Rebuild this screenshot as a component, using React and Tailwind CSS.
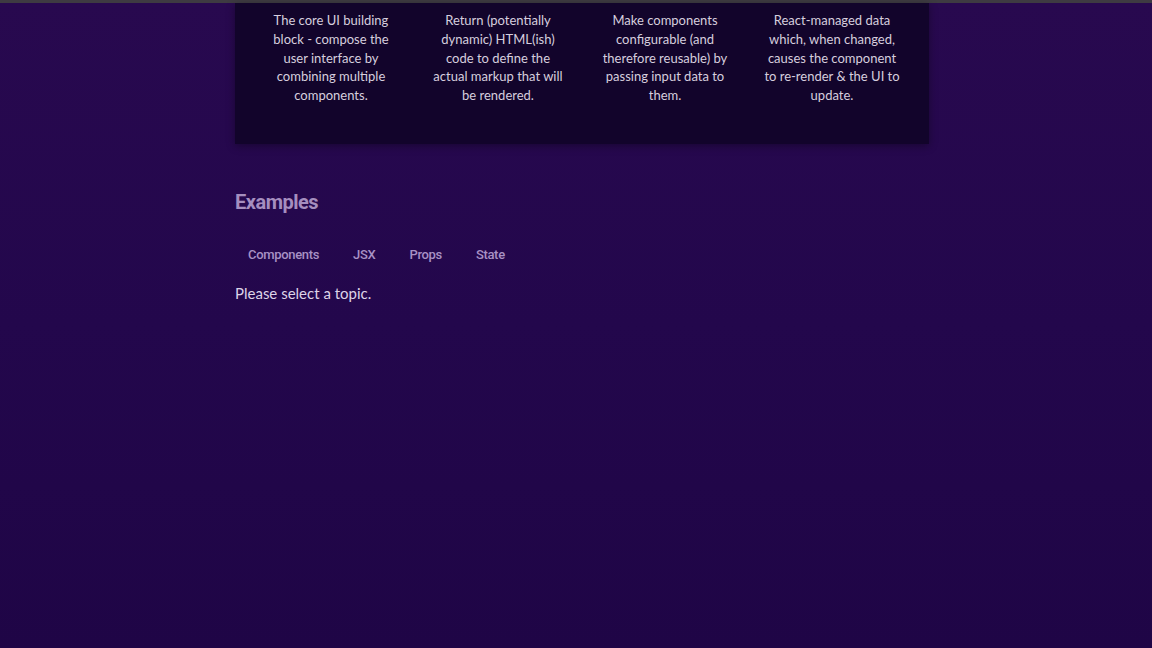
import React, { useState } from 'react';

const concepts = [
  {
    title: 'Components',
    description:
      'The core UI building block - compose the user interface by combining multiple components.',
  },
  {
    title: 'JSX',
    description:
      'Return (potentially dynamic) HTML(ish) code to define the actual markup that will be rendered.',
  },
  {
    title: 'Props',
    description:
      'Make components configurable (and therefore reusable) by passing input data to them.',
  },
  {
    title: 'State',
    description:
      'React-managed data which, when changed, causes the component to re-render & the UI to update.',
  },
];

const bodyFont = { fontFamily: 'Lato, "Open Sans", sans-serif' };
const headFont = { fontFamily: 'Roboto, "Liberation Sans", sans-serif' };

const App = () => {
  const [selected, setSelected] = useState(null);

  return (
    <div
      className="min-h-screen bg-gradient-to-b from-[#28094f] via-[#23074c] to-[#1f0546]"
      style={bodyFont}
    >
      {/* browser strip */}
      <div className="h-[3px] bg-[#3e3b42]" />

      <main className="ml-[235px] w-[694px]">
        {/* core concepts */}
        <section className="bg-[#12042b] pl-[27px] pt-[8px] pb-[39px] shadow-[0_2px_8px_rgba(0,0,0,0.35)]">
          <ul className="flex gap-[29px]">
            {concepts.map((c) => (
              <li
                key={c.title}
                className="w-[138px] text-center text-[13px] leading-[18.8px] text-[#d6cede]"
              >
                {c.description}
              </li>
            ))}
          </ul>
        </section>

        {/* examples */}
        <section className="mt-[44px]">
          <h2
            className="text-[20px] leading-[28px] font-bold tracking-tight text-[#a58ebf]"
            style={headFont}
          >
            Examples
          </h2>
          <menu className="mt-[25px] flex gap-[8px]">
            {concepts.map((c) => (
              <button
                key={c.title}
                onClick={() => setSelected(c.title)}
                className="px-[13px] py-[4px] text-[13px] leading-[20px] font-medium tracking-tight text-[#a891c4] rounded-md hover:bg-[#2f0c5e]"
                style={headFont}
              >
                {c.title}
              </button>
            ))}
          </menu>
          <p className="mt-[13px] text-[15px] leading-[22px] text-[#ddd4e8]">
            {selected
              ? concepts.find((c) => c.title === selected).description
              : 'Please select a topic.'}
          </p>
        </section>
      </main>
    </div>
  );
};

export default App;
